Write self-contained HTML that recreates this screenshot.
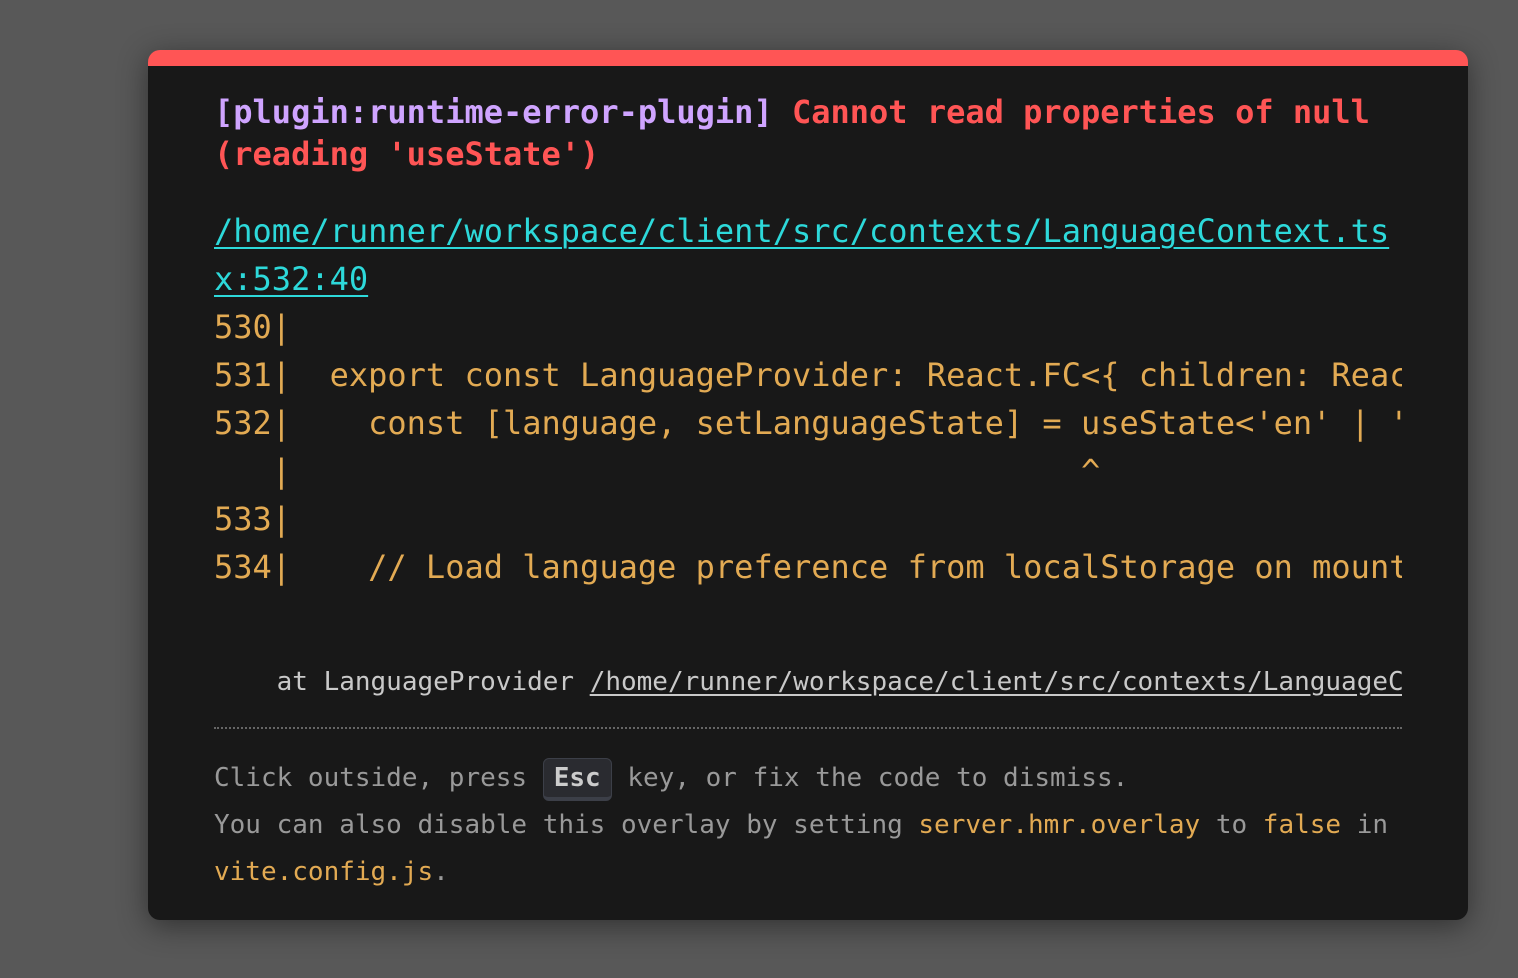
<!DOCTYPE html>
<html><head><meta charset="utf-8"><style>
html,body{margin:0;padding:0;width:1518px;height:978px;background:#585858;overflow:hidden}
*{box-sizing:border-box}
.win{position:absolute;left:148px;top:50px;width:1320px;height:870px;background:#181818;border-top:16px solid #ff5555;border-radius:12px;box-shadow:0 6px 30px rgba(0,0,0,.45);font-family:"DejaVu Sans Mono","Liberation Mono",monospace}
.l{position:absolute;left:66px;white-space:pre;font-size:32px}
.msg{top:25px;font-weight:bold;line-height:42px;color:#ff5555}
.plugin{color:#cfa4ff}
.file{top:141px;line-height:48px;color:#2dd9da;text-decoration:underline;text-underline-offset:5px;text-decoration-thickness:2px}
.code{top:237px;line-height:48px;color:#e2aa53;width:1188px;overflow:hidden}
.stack{top:596px;width:1188px;overflow:hidden;font-size:26px;line-height:40px;color:#c9c9c9}
.stack u{text-underline-offset:4px}
.sep{position:absolute;left:66px;width:1188px;top:661px;border-top:2px dotted #666}
.tip{top:689px;font-size:26px;line-height:47px;color:#999}
.tip .y{color:#e2aa53}
kbd{font-family:inherit;font-weight:bold;color:#ccc;background:#2a2b30;border:1px solid #3c3f48;border-bottom:4px solid #3c3f48;border-radius:6px;padding:0 10px;line-height:38px;display:inline-block}
</style></head><body>
<div class="win">
<div class="l msg"><span class="plugin">[plugin:runtime-error-plugin]</span> Cannot read properties of null
(reading 'useState')</div>
<div class="l file">/home/runner/workspace/client/src/contexts/LanguageContext.ts
x:532:40</div>
<div class="l code">530|
531|  export const LanguageProvider: React.FC&lt;{ children: React.ReactNode }&gt; = ({ children }) =&gt; {
532|    const [language, setLanguageState] = useState&lt;'en' | 'fr'&gt;('en');
   |                                         ^
533|
534|    // Load language preference from localStorage on mount</div>
<div class="l stack">    at LanguageProvider <u>/home/runner/workspace/client/src/contexts/LanguageContext.tsx:532:40</u></div>
<div class="sep"></div>
<div class="l tip">Click outside, press <kbd>Esc</kbd> key, or fix the code to dismiss.
You can also disable this overlay by setting <span class="y">server.hmr.overlay</span> to <span class="y">false</span> in
<span class="y">vite.config.js</span>.</div>
</div>
</body></html>
